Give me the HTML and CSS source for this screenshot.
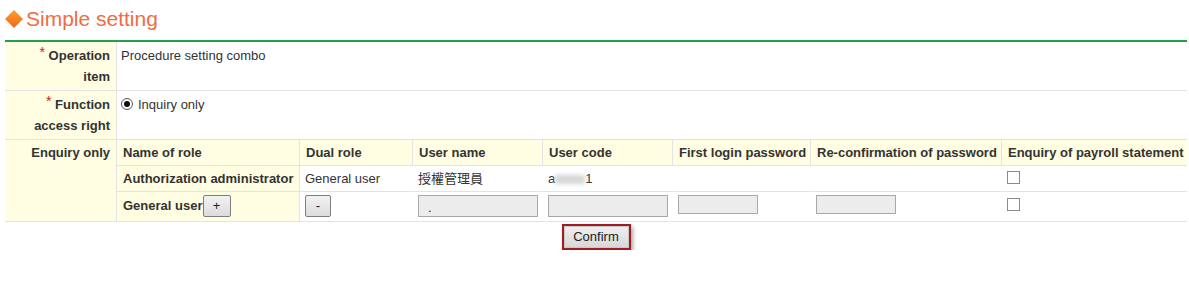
FILE: index.html
```html
<!DOCTYPE html>
<html lang="en">
<head>
<meta charset="utf-8">
<title>Simple setting</title>
<link rel="stylesheet" href="styles.css">
</head>
<body>
<div class="page">
  <h1 class="title"><svg class="diamond" width="17" height="17" viewBox="0 0 17 17" aria-hidden="true"><defs><linearGradient id="dg" x1="0" y1="0" x2="0" y2="1"><stop offset="0" stop-color="#f9a12a"/><stop offset="1" stop-color="#f2661c"/></linearGradient></defs><polygon points="8.5,0 17,8.5 8.5,17 0,8.5" fill="url(#dg)"/></svg>Simple setting</h1>
  <table class="form">
    <tr class="row-a">
      <th class="label"><span class="req">*</span> Operation<br>item</th>
      <td class="value">Procedure setting combo</td>
    </tr>
    <tr class="row-a">
      <th class="label"><span class="req">*</span> Function<br>access right</th>
      <td class="value"><label class="radio-line"><input type="radio" class="radio" checked> Inquiry only</label></td>
    </tr>
    <tr>
      <th class="label label-top">Enquiry only</th>
      <td class="value nested">
        <table class="grid">
          <tr>
            <th class="c1">Name of role</th>
            <th class="c2">Dual role</th>
            <th class="c3">User name</th>
            <th class="c4">User code</th>
            <th class="c5">First login password</th>
            <th class="c6">Re-confirmation of password</th>
            <th class="c7">Enquiry of payroll statement</th>
          </tr>
          <tr class="data">
            <th class="rowhead">Authorization administrator</th>
            <td>General user</td>
            <td class="cjk">授權管理員</td>
            <td>a<span class="masked"></span>1</td>
            <td></td>
            <td></td>
            <td><input type="checkbox" class="check"></td>
          </tr>
          <tr class="data tall last">
            <th class="rowhead">General user<button class="mini-btn" type="button">+</button></th>
            <td><button class="mini-btn minus" type="button">-</button></td>
            <td><input type="text" class="field field-wide" value="."></td>
            <td><input type="text" class="field field-wide"></td>
            <td><input type="password" class="field field-short"></td>
            <td><input type="password" class="field field-short"></td>
            <td><input type="checkbox" class="check"></td>
          </tr>
        </table>
      </td>
    </tr>
  </table>
  <div class="actions">
    <span class="btn-frame"><button type="button" class="btn-confirm">Confirm</button></span>
  </div>
</div>
</body>
</html>
```

FILE: styles.css
```css
* { box-sizing: border-box; }
html, body { margin: 0; padding: 0; background: #fff; }
body {
  font-family: Arial, "Liberation Sans", "Noto Sans CJK TC", sans-serif;
  font-size: 13px;
  color: #333;
}
.page { padding: 0 2px 0 5px; }

.title {
  margin: 0;
  padding-top: 6px;
  height: 40px;
  font-size: 21px;
  line-height: 26px;
  font-weight: normal;
  color: #f06c44;
  display: flex;
  align-items: flex-start;
}
.diamond { width: 18px; height: 18px; margin: 4px 3px 0 0; flex: none; }

.form {
  width: 1182px;
  border-collapse: separate;
  border-spacing: 0;
  table-layout: fixed;
  border-top: 2px solid #23a04c;
}
.form > tbody > tr > th,
.form > tbody > tr > td {
  border-bottom: 1px solid #e3e3e3;
  vertical-align: top;
  line-height: 21px;
}
.label {
  width: 112px;
  background: #fffde2;
  text-align: right;
  font-weight: bold;
  padding: 3px 6px 3px 4px;
  border-right: 1px solid #e3e3e3;
}
.row-a .label, .row-a .value { height: 48px; }
.label-top { padding-top: 2px; }
.value {
  text-align: left;
  padding: 3px 4px;
}
.value.nested { padding: 0; }
.req {
  color: #cc2222;
  font-weight: normal;
  font-size: 14px;
  vertical-align: top;
  position: relative;
  top: -3px;
}

.radio-line { display: inline-flex; align-items: center; }
.radio {
  appearance: none;
  -webkit-appearance: none;
  width: 12px;
  height: 12px;
  margin: 0 5px 0 0;
  border: 1px solid #555;
  border-radius: 50%;
  background: #fff;
  position: relative;
  top: -1px;
}
.radio:checked::after {
  content: "";
  position: absolute;
  left: 2px;
  top: 2px;
  width: 6px;
  height: 6px;
  border-radius: 50%;
  background: #111;
}

.grid {
  width: 1070px;
  border-collapse: separate;
  border-spacing: 0;
  table-layout: fixed;
}
.grid th, .grid td {
  text-align: left;
  padding: 2px 5px 2px 6px;
  line-height: 21px;
  border-right: 1px solid #e3e3e3;
  border-bottom: 1px solid #e3e3e3;
  white-space: nowrap;
  vertical-align: top;
}
.grid th { font-weight: bold; background: #fffde2; }
.grid tr > :last-child { border-right: none; }
.grid tr.last > * { border-bottom: none; }
.grid td { background: #fff; padding-left: 5px; border-right-color: transparent; }
.grid .c1 { width: 183px; }
.grid .c2 { width: 113px; }
.grid .c3 { width: 130px; }
.grid .c4 { width: 130px; }
.grid .c5 { width: 138px; }
.grid .c6 { width: 191px; }
.grid .c7 { width: 185px; }
.grid .data > * { padding-top: 2px; padding-bottom: 2px; }
.grid .tall > * { padding-top: 3px; padding-bottom: 3px; height: 29px; }
.cjk { padding-left: 6px; }

.masked {
  display: inline-block;
  width: 30px;
  height: 9px;
  background: #d6d6d6;
  filter: blur(2px);
  vertical-align: -1px;
}

.check {
  appearance: none;
  -webkit-appearance: none;
  width: 13px;
  height: 13px;
  margin: 3px 0 0 0;
  border: 1px solid #8a8a8a;
  background: #fff;
  vertical-align: top;
}

.mini-btn {
  font-family: Arial, "Liberation Sans", sans-serif;
  font-size: 13px;
  color: #222;
  width: 28px;
  height: 22px;
  padding: 0;
  margin: 0;
  border: 1px solid #7d7d7d;
  border-radius: 2px;
  background: linear-gradient(#f2f2f2, #dcdcdc);
  vertical-align: top;
  line-height: 18px;
}
.mini-btn.minus { width: 26px; }

.field {
  height: 22px;
  border: 1px solid #a9a9a9;
  background: #ececec;
  font-family: Arial, "Liberation Sans", sans-serif;
  font-size: 13px;
  color: #222;
  padding: 2px 9px 0;
  margin: 0;
  vertical-align: top;
}
.field-wide { width: 120px; }
.field-short { width: 80px; height: 19px; }

.actions {
  width: 1182px;
  display: flex;
  justify-content: center;
  padding-top: 2px;
}
.btn-frame {
  display: inline-block;
  border: 2px solid #a01c22;
  box-shadow: 2px 3px 4px rgba(0,0,0,0.35);
}
.btn-confirm {
  display: block;
  width: 65px;
  height: 22px;
  margin: 0;
  padding: 0;
  border: 1px solid #c8c8c8;
  background: linear-gradient(#eeeeee, #d8d8d8);
  font-family: Arial, "Liberation Sans", sans-serif;
  font-size: 13px;
  color: #222;
  line-height: 20px;
}
```
